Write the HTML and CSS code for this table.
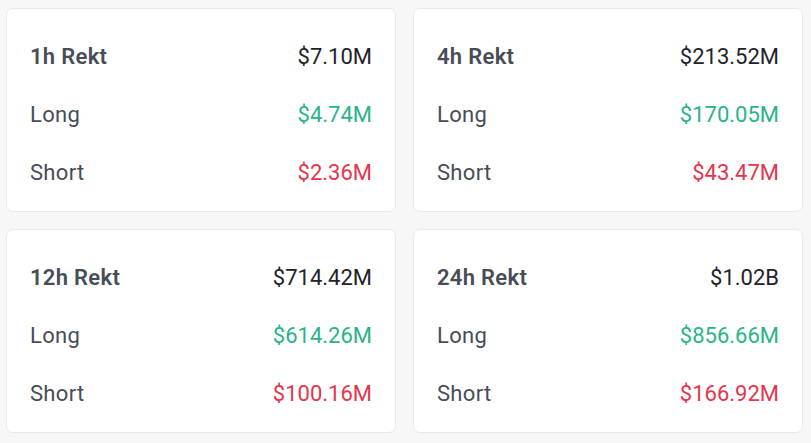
FILE: index.html
```html
<!DOCTYPE html>
<html lang="en">
<head>
<meta charset="utf-8">
<title>Rekt</title>
<link rel="stylesheet" href="styles.css">
</head>
<body>
<main class="grid">
  <section class="card">
    <div class="row title"><span class="label">1h Rekt</span><span class="value">$7.10M</span></div>
    <div class="row"><span class="label">Long</span><span class="value up">$4.74M</span></div>
    <div class="row"><span class="label">Short</span><span class="value down">$2.36M</span></div>
  </section>
  <section class="card">
    <div class="row title"><span class="label">4h Rekt</span><span class="value">$213.52M</span></div>
    <div class="row"><span class="label">Long</span><span class="value up">$170.05M</span></div>
    <div class="row"><span class="label">Short</span><span class="value down">$43.47M</span></div>
  </section>
  <section class="card">
    <div class="row title"><span class="label">12h Rekt</span><span class="value">$714.42M</span></div>
    <div class="row"><span class="label">Long</span><span class="value up">$614.26M</span></div>
    <div class="row"><span class="label">Short</span><span class="value down">$100.16M</span></div>
  </section>
  <section class="card">
    <div class="row title"><span class="label">24h Rekt</span><span class="value">$1.02B</span></div>
    <div class="row"><span class="label">Long</span><span class="value up">$856.66M</span></div>
    <div class="row"><span class="label">Short</span><span class="value down">$166.92M</span></div>
  </section>
</main>
</body>
</html>
```
FILE: styles.css
```css
html, body {
  margin: 0;
  background: #f7f7f7;
}
body {
  padding: 8px 8px 10px 6px;
  font-family: Roboto, "Liberation Sans", sans-serif;
  font-size: 22px;
}
.grid {
  display: grid;
  grid-template-columns: 390px 390px;
  grid-auto-rows: 204px;
  gap: 17px;
}
.card {
  box-sizing: border-box;
  background: #ffffff;
  border: 1px solid #e9e9e9;
  border-radius: 7px;
  padding: 19px 23px 9px 23px;
  display: flex;
  flex-direction: column;
}
.row {
  height: 58.5px;
  display: flex;
  align-items: center;
  justify-content: space-between;
  line-height: 1;
}
.label {
  color: #474d57;
  letter-spacing: 0.3px;
}
.title .label {
  font-weight: 600;
}
.value {
  color: #1e2329;
}
.value.up {
  color: #2bb38a;
}
.value.down {
  color: #e6354c;
}
```
